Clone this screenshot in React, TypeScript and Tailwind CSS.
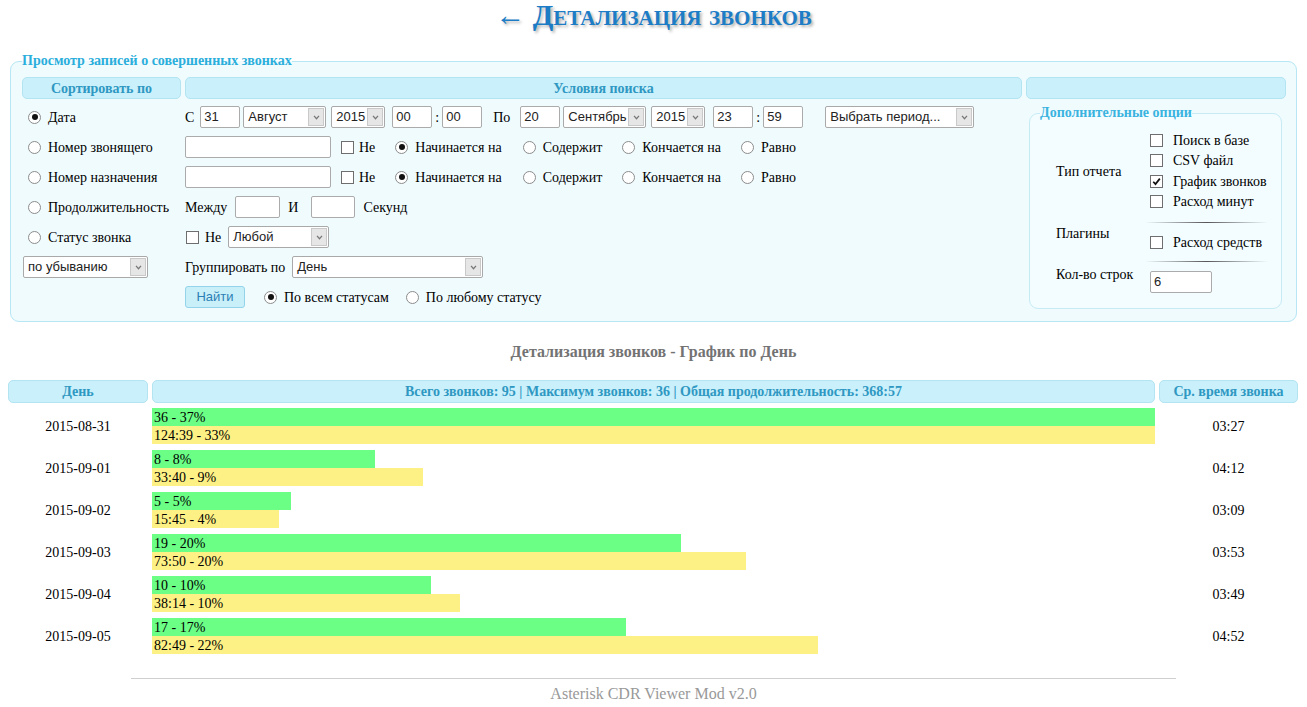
import React from 'react';

function Radio({ checked = false }: { checked?: boolean }) {
  return (
    <span className="inline-flex h-[13px] w-[13px] shrink-0 items-center justify-center rounded-full border border-[#8c8c8c] bg-white">
      {checked && <span className="h-[6px] w-[6px] rounded-full bg-[#111]" />}
    </span>
  );
}

function Check({ checked = false }: { checked?: boolean }) {
  return (
    <span className="inline-flex h-[13px] w-[13px] shrink-0 items-center justify-center border border-[#6e6e6e] bg-white">
      {checked && (
        <svg viewBox="0 0 10 10" className="h-[9px] w-[9px]">
          <path d="M1.4 5.3 L3.9 7.9 L8.7 1.8" stroke="#111" strokeWidth="1.9" fill="none" />
        </svg>
      )}
    </span>
  );
}

function Input({ value = '', className = '' }: { value?: string; className?: string }) {
  return (
    <span
      className={`inline-flex h-[22px] items-center rounded-[2px] border border-[#ababab] bg-white pl-[3px] font-['Liberation_Sans',sans-serif] text-[13px] text-[#222] ${className}`}
    >
      {value}
    </span>
  );
}

function Select({ value, className = '' }: { value: string; className?: string }) {
  return (
    <span
      className={`inline-flex h-[22px] items-center rounded-[2px] border border-[#a9a9a9] bg-white font-['Liberation_Sans',sans-serif] text-[13px] text-[#222] ${className}`}
    >
      <span className="flex-1 truncate pl-[4px]">{value}</span>
      <span className="m-[1px] flex h-[18px] w-[16px] items-center justify-center border border-[#c9c9c9] bg-[#e6e6e6]">
        <svg viewBox="0 0 8 6" className="h-[5px] w-[7px]">
          <path d="M1 1 L4 4.5 L7 1" stroke="#777" strokeWidth="1.5" fill="none" />
        </svg>
      </span>
    </span>
  );
}

function Opt({ checked = false, label, className = '' }: { checked?: boolean; label: string; className?: string }) {
  return (
    <span className={`inline-flex items-center gap-[7px] ${className}`}>
      <Radio checked={checked} />
      <span>{label}</span>
    </span>
  );
}

const header = 'flex items-center justify-center rounded-[5px] border border-[#b3e4f2] bg-[#c9f0fb] font-bold text-[14px] text-[#2f98c2]';

const rows = [
  { d: '2015-08-31', c: 36, cp: '37%', dur: '124:39', sec: 7479, dp: '33%', avg: '03:27' },
  { d: '2015-09-01', c: 8, cp: '8%', dur: '33:40', sec: 2020, dp: '9%', avg: '04:12' },
  { d: '2015-09-02', c: 5, cp: '5%', dur: '15:45', sec: 945, dp: '4%', avg: '03:09' },
  { d: '2015-09-03', c: 19, cp: '20%', dur: '73:50', sec: 4430, dp: '20%', avg: '03:53' },
  { d: '2015-09-04', c: 10, cp: '10%', dur: '38:14', sec: 2294, dp: '10%', avg: '03:49' },
  { d: '2015-09-05', c: 17, cp: '17%', dur: '82:49', sec: 4969, dp: '22%', avg: '04:52' },
];

export default function App() {
  return (
    <div className="min-h-[707px] bg-white font-['Liberation_Serif',serif] text-[14px] text-black">
      <h1 className="text-center text-[30px] font-bold leading-[30px] text-[#1c7cc6] [font-variant:small-caps] [text-shadow:2px_2px_3px_rgba(0,0,0,0.3)]">
        ← Детализация звонков
      </h1>

      <fieldset className="mx-[10px] mt-[23px] rounded-[9px] border border-[#b7e7f4] bg-[#f0fbfe] pb-[9px] pl-[11px] pr-[10px] pt-[8px]">
        <legend className="text-[14px] font-bold leading-[16px] text-[#2aaedb]">Просмотр записей о совершенных звонках</legend>

        <div className="grid grid-cols-[159px_837px_260px] gap-x-[4px]">
          <div className={`${header} mb-[3px] h-[22px]`}>Сортировать по</div>
          <div className={`${header} mb-[3px] h-[22px]`}>Условия поиска</div>
          <div className={`${header} mb-[3px] h-[22px]`}></div>

          {/* column 1 */}
          <div className="flex flex-col">
            <div className="flex h-[30px] items-center pl-[6px]"><Opt checked label="Дата" /></div>
            <div className="flex h-[30px] items-center pl-[6px]"><Opt label="Номер звонящего" /></div>
            <div className="flex h-[30px] items-center pl-[6px]"><Opt label="Номер назначения" /></div>
            <div className="flex h-[30px] items-center pl-[6px]"><Opt label="Продолжительность" /></div>
            <div className="flex h-[30px] items-center pl-[6px]"><Opt label="Статус звонка" /></div>
            <div className="flex h-[30px] items-center pl-[1px]"><Select value="по убыванию" className="w-[125px]" /></div>
            <div className="h-[30px]" />
          </div>

          {/* column 2 */}
          <div className="flex flex-col">
            <div className="flex h-[30px] items-center">
              <span>С</span>
              <Input value="31" className="ml-[6px] w-[40px]" />
              <Select value="Август" className="ml-[3px] w-[83px]" />
              <Select value="2015" className="ml-[5px] w-[54px]" />
              <Input value="00" className="ml-[7px] w-[40px]" />
              <span className="mx-[3px]">:</span>
              <Input value="00" className="w-[40px]" />
              <span className="ml-[11px]">По</span>
              <Input value="20" className="ml-[10px] w-[40px]" />
              <Select value="Сентябрь" className="ml-[3px] w-[83px]" />
              <Select value="2015" className="ml-[5px] w-[54px]" />
              <Input value="23" className="ml-[8px] w-[40px]" />
              <span className="mx-[3px]">:</span>
              <Input value="59" className="w-[40px]" />
              <Select value="Выбрать период..." className="ml-[22px] w-[149px]" />
            </div>
            {[0, 1].map((i) => (
              <div key={i} className="flex h-[30px] items-center">
                <Input className="w-[146px]" />
                <span className="ml-[10px] inline-flex items-center gap-[5px]"><Check /><span>Не</span></span>
                <Opt checked label="Начинается на" className="ml-[20px]" />
                <Opt label="Содержит" className="ml-[21px]" />
                <Opt label="Кончается на" className="ml-[20px]" />
                <Opt label="Равно" className="ml-[20px]" />
              </div>
            ))}
            <div className="flex h-[30px] items-center">
              <span>Между</span>
              <Input className="ml-[8px] w-[45px]" />
              <span className="ml-[8px]">И</span>
              <Input className="ml-[13px] w-[44px]" />
              <span className="ml-[8px]">Секунд</span>
            </div>
            <div className="flex h-[30px] items-center">
              <span className="inline-flex items-center gap-[6px] pl-[1px]"><Check /><span>Не</span></span>
              <Select value="Любой" className="ml-[7px] w-[101px]" />
            </div>
            <div className="flex h-[30px] items-center">
              <span>Группировать по</span>
              <Select value="День" className="ml-[7px] w-[191px]" />
            </div>
            <div className="flex h-[30px] items-center">
              <span className="flex h-[22px] w-[60px] items-center justify-center rounded-[3px] border border-[#93d4ea] bg-[#c9eff9] font-['Liberation_Sans',sans-serif] text-[13px] text-[#2c7fb5]">
                Найти
              </span>
              <Opt checked label="По всем статусам" className="ml-[19px]" />
              <Opt label="По любому статусу" className="ml-[17px]" />
            </div>
          </div>

          {/* column 3 */}
          <div>
            <fieldset className="ml-[3px] mr-[4px] mt-[3px] rounded-[9px] border border-[#c6ebf5] bg-[#f3fcff] pb-[15px] pl-[10px]">
              <legend className="text-[14px] font-bold leading-[16px] text-[#3ab3df]">Дополнительные опции</legend>
              <div className="grid grid-cols-[94px_1fr] pl-[16px] pt-[9px]">
                <div className="col-start-1 row-start-1 self-center">Тип отчета</div>
                <div className="col-start-2 row-start-1 flex flex-col">
                  {[
                    ['Поиск в базе', false],
                    ['CSV файл', false],
                    ['График звонков', true],
                    ['Расход минут', false],
                  ].map(([l, c]) => (
                    <div key={l as string} className="flex h-[20.5px] items-center gap-[10px]">
                      <Check checked={c as boolean} />
                      <span>{l}</span>
                    </div>
                  ))}
                </div>
                <div className="col-start-1 row-span-2 row-start-2 self-center pt-[2px]">Плагины</div>
                <div className="col-start-2 row-start-2 flex h-[20px] items-center">
                  <div className="-ml-[5px] h-px w-[123px] bg-gradient-to-r from-transparent via-[#555] to-transparent" />
                </div>
                <div className="col-start-2 row-start-3 flex h-[20px] items-center gap-[10px]">
                  <Check />
                  <span>Расход средств</span>
                </div>
                <div className="col-start-1 row-span-2 row-start-4 self-center pt-[4px]">Кол-во строк</div>
                <div className="col-start-2 row-start-4 flex h-[19px] items-center">
                  <div className="-ml-[5px] h-px w-[123px] bg-gradient-to-r from-transparent via-[#555] to-transparent" />
                </div>
                <div className="col-start-2 row-start-5">
                  <Input value="6" className="w-[62px]" />
                </div>
              </div>
            </fieldset>
          </div>
        </div>
      </fieldset>

      <div className="mt-[21px] text-center text-[16px] font-bold leading-[18px] text-[#737373]">
        Детализация звонков - График по День
      </div>

      <div className="ml-[8px] mt-[19px] grid w-[1290px] grid-cols-[140px_1003px_139px] gap-x-[4px]">
        <div className={`${header} mb-[2px] h-[23px]`}>День</div>
        <div className={`${header} mb-[2px] h-[23px]`}>Всего звонков: 95 | Максимум звонков: 36 | Общая продолжительность: 368:57</div>
        <div className={`${header} mb-[2px] h-[23px]`}>Ср. время звонка</div>
        {rows.map((r) => (
          <React.Fragment key={r.d}>
            <div className="flex h-[42px] items-center justify-center">{r.d}</div>
            <div className="flex h-[42px] flex-col justify-center">
              <div
                className="h-[18px] whitespace-nowrap bg-[#6bff86] pl-[2px] leading-[19px]"
                style={{ width: `${(r.c / 36) * 100}%` }}
              >
                {r.c} - {r.cp}
              </div>
              <div
                className="h-[18px] whitespace-nowrap bg-[#fdf084] pl-[2px] leading-[19px]"
                style={{ width: `${(r.sec / 7479) * 100}%` }}
              >
                {r.dur} - {r.dp}
              </div>
            </div>
            <div className="flex h-[42px] items-center justify-center">{r.avg}</div>
          </React.Fragment>
        ))}
      </div>

      <div className="mx-auto mt-[21px] h-px w-[80%] bg-[#cfcfcf]" />
      <div className="mt-[6px] text-center text-[16px] leading-[18px] text-[#999]">Asterisk CDR Viewer Mod v2.0</div>
    </div>
  );
}
